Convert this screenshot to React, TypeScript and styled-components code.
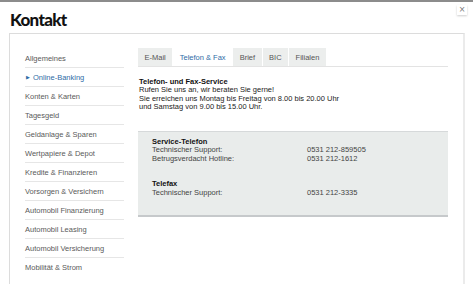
import styled, { createGlobalStyle } from 'styled-components';

const GlobalStyle = createGlobalStyle`
  html, body {
    margin: 0;
    padding: 0;
    background: #ffffff;
    overflow: hidden;
  }
  body {
    font-family: "Liberation Sans", Arial, sans-serif;
  }
`;

const Page = styled.div`
  width: 473px;
  height: 284px;
  border-top: 2px solid #8c8c8c;
  box-sizing: border-box;
  overflow: hidden;
`;

const Header = styled.div`
  display: flex;
  justify-content: space-between;
  align-items: flex-start;
  height: 31px;
  padding: 0 6px 0 10px;
`;

const Title = styled.h1`
  margin: 9px 0 0;
  font-family: Lato, "DejaVu Sans", sans-serif;
  font-weight: 900;
  font-size: 17px;
  letter-spacing: -0.7px;
  line-height: 18px;
  color: #111;
`;

const CloseButton = styled.button`
  margin-top: 3px;
  width: 10px;
  height: 10px;
  padding: 0;
  border: none;
  background: #fff;
  box-shadow: 0 1px 2px rgba(0, 0, 0, 0.2);
  color: #777;
  font-family: "DejaVu Sans", sans-serif;
  font-size: 8px;
  line-height: 10px;
  cursor: pointer;
`;

const Panel = styled.div`
  display: flex;
  margin-left: 9px;
  width: 456px;
  height: 280px;
  box-sizing: border-box;
  border: 1px solid #dcdcdc;
  border-right: 2px solid #ebebeb;
  padding: 14px 0 0 15px;
`;

const Sidebar = styled.ul`
  list-style: none;
  margin: 1px 0 0;
  padding: 0;
  width: 99px;
  flex-shrink: 0;
`;

const NavItem = styled.li<{ $active?: boolean; $last?: boolean }>`
  display: flex;
  align-items: center;
  height: 19px;
  box-sizing: border-box;
  border-bottom: ${(p) => (p.$last ? 'none' : '1px solid #e6e6e6')};
  font-size: 7.5px;
  color: ${(p) => (p.$active ? '#2f6ca6' : '#5a5a5a')};
  white-space: nowrap;
`;

const Bullet = styled.span`
  font-size: 5px;
  margin: 0 3px 0 1px;
  color: #2f6ca6;
`;

const Main = styled.div`
  margin-left: 14px;
  width: 310px;
`;

const TabRow = styled.div`
  display: flex;
  gap: 1px;
  height: 18px;
  border-bottom: 1px solid #e3e3e3;
`;

const Tab = styled.div<{ $active?: boolean }>`
  display: flex;
  align-items: center;
  padding: 0 6.5px;
  font-size: 7.5px;
  background: ${(p) => (p.$active ? '#ffffff' : '#eceeed')};
  color: ${(p) => (p.$active ? '#2f6ca6' : '#555')};
`;

const Intro = styled.div`
  margin: 11px 0 0 1px;
  font-size: 7.5px;
  line-height: 8.4px;
  color: #222;
`;

const Strong = styled.div`
  font-weight: bold;
  color: #111;
`;

const InfoBox = styled.div`
  margin-top: 19px;
  height: 86px;
  box-sizing: border-box;
  background: #e9eceb;
  border-top: 1px solid #d6d9da;
  border-bottom: 2px solid #c6c9cb;
  padding: 6px 0 0 14px;
`;

const Group = styled.div`
  font-size: 7.5px;
  line-height: 8.6px;
  color: #444;
  & + & {
    margin-top: 17px;
  }
`;

const Row = styled.div`
  display: grid;
  grid-template-columns: 155px 1fr;
`;

const navItems = [
  'Allgemeines',
  'Online-Banking',
  'Konten & Karten',
  'Tagesgeld',
  'Geldanlage & Sparen',
  'Wertpapiere & Depot',
  'Kredite & Finanzieren',
  'Vorsorgen & Versichern',
  'Automobil Finanzierung',
  'Automobil Leasing',
  'Automobil Versicherung',
  'Mobilität & Strom',
];

const tabs = ['E-Mail', 'Telefon & Fax', 'Brief', 'BIC', 'Filialen'];

const App = () => {
  return (
    <>
      <GlobalStyle />
      <Page>
        <Header>
          <Title>Kontakt</Title>
          <CloseButton>×</CloseButton>
        </Header>
        <Panel>
          <Sidebar>
            {navItems.map((item, i) => (
              <NavItem
                key={item}
                $active={item === 'Online-Banking'}
                $last={i === navItems.length - 1}
              >
                {item === 'Online-Banking' && <Bullet>▶</Bullet>}
                {item}
              </NavItem>
            ))}
          </Sidebar>
          <Main>
            <TabRow>
              {tabs.map((t) => (
                <Tab key={t} $active={t === 'Telefon & Fax'}>
                  {t}
                </Tab>
              ))}
            </TabRow>
            <Intro>
              <Strong>Telefon- und Fax-Service</Strong>
              <div>Rufen Sie uns an, wir beraten Sie gerne!</div>
              <div>Sie erreichen uns Montag bis Freitag von 8.00 bis 20.00 Uhr</div>
              <div>und Samstag von 9.00 bis 15.00 Uhr.</div>
            </Intro>
            <InfoBox>
              <Group>
                <Strong>Service-Telefon</Strong>
                <Row>
                  <span>Technischer Support:</span>
                  <span>0531 212-859505</span>
                </Row>
                <Row>
                  <span>Betrugsverdacht Hotline:</span>
                  <span>0531 212-1612</span>
                </Row>
              </Group>
              <Group>
                <Strong>Telefax</Strong>
                <Row>
                  <span>Technischer Support:</span>
                  <span>0531 212-3335</span>
                </Row>
              </Group>
            </InfoBox>
          </Main>
        </Panel>
      </Page>
    </>
  );
};

export default App;
